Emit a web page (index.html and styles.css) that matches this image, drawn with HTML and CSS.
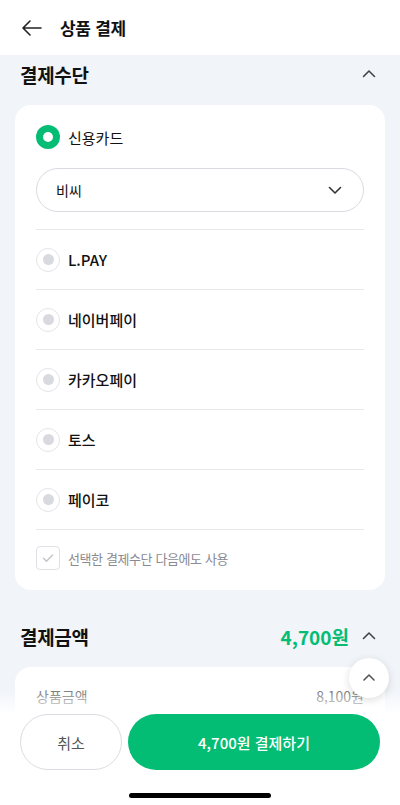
FILE: index.html
```html
<!DOCTYPE html>
<html lang="ko">
<head>
  <meta charset="UTF-8">
  <title>상품 결제</title>
  <link rel="stylesheet" href="styles.css">
</head>
<body>

<header class="topbar">
  <svg class="back" width="24" height="24" viewBox="0 0 24 24"><path d="M21 12H3M10 5l-7 7 7 7" fill="none" stroke="#222" stroke-width="1.6" stroke-linecap="round" stroke-linejoin="round"/></svg>
  <h1>상품 결제</h1>
</header>

<main class="page">
  <div class="sec-head">
    <h2>결제수단</h2>
    <svg class="chev" width="16" height="16" viewBox="0 0 16 16"><path d="M2.5 10.5L8 5l5.5 5.5" fill="none" stroke="#444" stroke-width="1.6" stroke-linecap="round" stroke-linejoin="round"/></svg>
  </div>

  <div class="card pay-card">
    <div class="opt first">
      <span class="radio on"></span>
      <span class="label light">신용카드</span>
    </div>
    <div class="select">
      <span>비씨</span>
      <svg width="16" height="16" viewBox="0 0 16 16"><path d="M2.5 5.5L8 11l5.5-5.5" fill="none" stroke="#333" stroke-width="1.6" stroke-linecap="round" stroke-linejoin="round"/></svg>
    </div>
    <div class="opt line"><span class="radio"></span><span class="label">L.PAY</span></div>
    <div class="opt line"><span class="radio"></span><span class="label">네이버페이</span></div>
    <div class="opt line"><span class="radio"></span><span class="label">카카오페이</span></div>
    <div class="opt line"><span class="radio"></span><span class="label">토스</span></div>
    <div class="opt line"><span class="radio"></span><span class="label">페이코</span></div>
    <div class="check-row">
      <span class="check">
        <svg width="14" height="14" viewBox="0 0 14 14"><path d="M2.5 7.2l3 3 6-6.2" fill="none" stroke="#c4c4cc" stroke-width="1.5" stroke-linecap="round" stroke-linejoin="round"/></svg>
      </span>
      <span>선택한 결제수단 다음에도 사용</span>
    </div>
  </div>

  <div class="sec-head second">
    <h2>결제금액</h2>
    <span class="total">4,700원</span>
    <svg class="chev" width="16" height="16" viewBox="0 0 16 16"><path d="M2.5 10.5L8 5l5.5 5.5" fill="none" stroke="#444" stroke-width="1.6" stroke-linecap="round" stroke-linejoin="round"/></svg>
  </div>

  <div class="card sum-card">
    <div class="sum-row"><span>상품금액</span><span>8,100원</span></div>
  </div>
</main>

<button class="to-top">
  <svg width="16" height="16" viewBox="0 0 16 16"><path d="M3 10l5-5 5 5" fill="none" stroke="#555" stroke-width="1.6" stroke-linecap="round" stroke-linejoin="round"/></svg>
</button>

<div class="bottom">
  <div class="btns">
    <button class="btn cancel">취소</button>
    <button class="btn pay">4,700원 결제하기</button>
  </div>
  <div class="home-bar"></div>
</div>

</body>
</html>
```

FILE: styles.css
```css
* { box-sizing: border-box; }
html, body { margin: 0; height: 805px; overflow: hidden; }
body { font-family: "Noto Sans CJK KR", "Noto Sans", sans-serif; background: #f1f4f9; color: #111; position: relative; }

.topbar { height: 55px; background: #fff; display: flex; align-items: center; padding: 0 20px; gap: 16px; }
.topbar h1 { margin: 0; font-size: 17px; font-weight: 700; letter-spacing: -0.3px; }
.back { flex: none; }

.page { padding: 0 15px; }
.sec-head { height: 38px; display: flex; align-items: center; padding: 0 5px; }
.sec-head h2 { margin: 0; font-size: 19px; font-weight: 700; flex: 1; letter-spacing: -0.3px; }
.sec-head .chev { margin-right: 3px; }
.sec-head.second { margin-top: 27px; }
.total { color: #04bd74; font-size: 19px; font-weight: 700; margin-right: 12px; }

.card { background: #fff; border-radius: 16px; margin-top: 12px; padding: 0 21px; }
.pay-card { padding-top: 16px; padding-bottom: 20px; }

.opt { display: flex; align-items: center; gap: 8px; font-size: 15px; }
.opt.first { height: 32px; }
.opt.line { height: 60px; border-top: 1px solid #e8e8ec; }
.label { font-weight: 500; }
.label.light { font-weight: 400; }

.radio { width: 24px; height: 24px; border-radius: 50%; border: 1px solid #e4e4ea; display: flex; align-items: center; justify-content: center; flex: none; }
.radio::after { content: ""; width: 11px; height: 11px; border-radius: 50%; background: #d9d9e0; }
.radio.on { border: none; background: #04bd74; }
.radio.on::after { width: 10px; height: 10px; background: #fff; }

.select { height: 44px; margin: 15px 0 17px; border: 1px solid #dadae0; border-radius: 22px; display: flex; align-items: center; justify-content: space-between; padding: 0 20px 0 19px; font-size: 14px; }

.check-row { border-top: 1px solid #e8e8ec; padding-top: 16px; display: flex; align-items: center; gap: 8px; font-size: 13px; letter-spacing: -0.4px; color: #8a8a93; }
.check { width: 24px; height: 24px; border: 1px solid #e0e0e6; border-radius: 4px; display: flex; align-items: center; justify-content: center; }

.sum-card { padding-top: 19px; padding-bottom: 40px; }
.sum-row { display: flex; justify-content: space-between; font-size: 14px; color: #777; height: 22px; }

.to-top { position: absolute; left: 349px; top: 658px; width: 40px; height: 40px; border-radius: 50%; border: none; background: #fff; box-shadow: 0 2px 8px rgba(0,0,0,0.14); display: flex; align-items: center; justify-content: center; padding: 0; z-index: 2; }

.bottom { position: absolute; left: 0; right: 0; bottom: 0; padding-top: 24px; background: linear-gradient(rgba(255,255,255,0), #fff 24px); }
.btns { display: flex; gap: 6px; padding: 0 20px; }
.btn { height: 56px; border-radius: 28px; font-family: inherit; font-size: 15px; }
.cancel { width: 102px; background: #fff; border: 1px solid #dcdce2; color: #555; }
.pay { flex: 1; background: #04bd74; border: none; color: #fff; font-weight: 500; }
.home-bar { width: 142px; height: 5px; border-radius: 3px; background: #000; margin: 23px auto 7px; }
```
